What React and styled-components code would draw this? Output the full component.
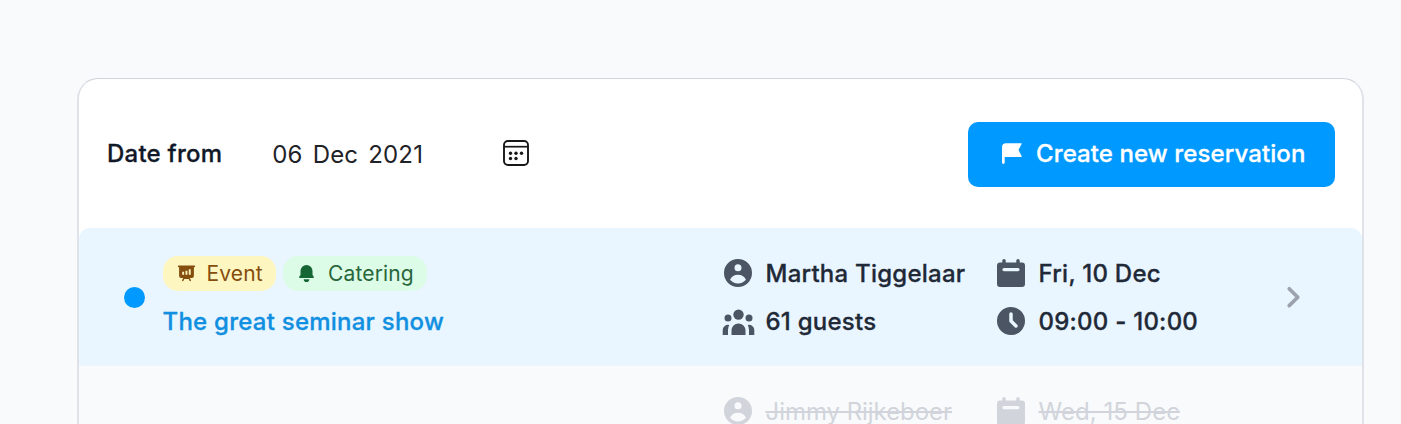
import React from 'react';
import styled, { createGlobalStyle } from 'styled-components';

const GlobalStyle = createGlobalStyle`
  * { box-sizing: border-box; }
  html, body { margin: 0; background: #f9fafc; }
  body { font-family: Inter, 'Liberation Sans', sans-serif; overflow: hidden; }
`;

const Page = styled.main`
  height: 424px;
  padding: 78px 37px 0 77px;
  overflow: hidden;
  background: #f9fafc;
`;

const Card = styled.section`
  height: 500px;
  border: solid #dfe2e8;
  border-width: 1px 2px;
  border-top-color: #d1d5db;
  border-radius: 21px;
  background: #fff;
`;

const Toolbar = styled.header`
  display: flex;
  align-items: center;
  height: 149px;
  padding: 0 27px 0 28px;
`;

const Text = styled.span`
  display: block;
  white-space: pre;
  font-size: ${(p) => p.$size || 24}px;
  font-weight: ${(p) => p.$weight || 500};
  line-height: 35px;
  letter-spacing: ${(p) => p.$track ?? 0.24}px;
  word-spacing: ${(p) => p.$words || 0}px;
  color: ${(p) => p.$color || '#1f2937'};
  -webkit-text-stroke: ${(p) => (p.$weight ? 0 : 0.3)}px currentColor;
  text-decoration: ${(p) => (p.$struck ? 'line-through' : 'none')};
  text-decoration-thickness: 2px;
`;

const DateField = styled.div`
  display: flex;
  align-items: center;
  justify-content: space-between;
  width: 257px;
  margin-left: 50px;
  padding-top: 2px;

  svg { margin-bottom: 3px; }
`;

const Button = styled.button`
  display: flex;
  align-items: center;
  gap: 14px;
  width: 367px;
  height: 65px;
  margin: 1px 0 0 auto;
  padding: 0 0 1px 34px;
  border: 0;
  border-radius: 10px;
  background: #0099ff;
  font-family: inherit;
`;

const Row = styled.article`
  display: grid;
  grid-template-columns: 21px 579px 273px 290px 14px;
  align-items: center;
  height: 138px;
  padding-left: 45px;
  border-radius: ${(p) => (p.$active ? '11px 11px 0 0' : '0')};
  background: ${(p) => (p.$active ? '#e9f6ff' : '#f9fafc')};
`;

const Dot = styled.i`
  width: 21px;
  height: 21px;
  border-radius: 50%;
  background: #0099ff;
`;

const Summary = styled.div`
  padding-left: 17.5px;
`;

const Tags = styled.div`
  display: flex;
  gap: 7px;
  margin-bottom: 13px;
`;

const Tag = styled.span`
  display: flex;
  align-items: center;
  gap: ${(p) => p.$gap}px;
  width: ${(p) => p.$width}px;
  height: 35px;
  padding-left: ${(p) => p.$pad}px;
  border-radius: 15px;
  color: ${(p) => p.$color};
  background: ${(p) => p.$bg};
`;

const Details = styled.div`
  display: flex;
  flex-direction: column;
  gap: 13px;
`;

const Detail = styled.div`
  display: flex;
  align-items: center;
  gap: 9.5px;
  height: 35px;
  color: ${(p) => p.$color || '#4b5563'};
`;

const Svg = styled.svg`
  display: block;
  flex: none;
  overflow: visible;
`;

const UserIcon = () => (
  <Svg width="32" height="28" viewBox="2 2 18.286 16" fill="currentColor">
    <path fillRule="evenodd" d="M18 10a8 8 0 11-16 0 8 8 0 0116 0zm-6-3a2 2 0 11-4 0 2 2 0 014 0zm-2 4a5 5 0 00-4.546 2.916A5.986 5.986 0 0010 16a5.986 5.986 0 004.546-2.084A5 5 0 0010 11z" />
  </Svg>
);

const GuestsIcon = () => (
  <Svg width="32" height="28" viewBox="0 0 32 28" fill="currentColor">
    <circle cx="14.500" cy="7.600" r="5.200" />
    <circle cx="4" cy="11" r="3.500" />
    <circle cx="25" cy="11" r="3.500" />
    <path d="M7.500 28v-4.500a7 7 0 0 1 14 0V28zM-1.300 28v-5a5.200 5.200 0 0 1 6.500-5 12 12 0 0 0-1.200 5v5zM30.300 28v-5a5.200 5.200 0 0 0-6.500-5 12 12 0 0 1 1.200 5v5z" />
  </Svg>
);

const CalendarIcon = () => (
  <Svg width="32" height="28" viewBox="0 0 32 28" fill="currentColor">
    <path fillRule="evenodd" d="M5.300 1.600a1.700 1.700 0 0 1 3.400 0v1.900h10.600V1.600a1.700 1.700 0 0 1 3.400 0v1.900H25a3 3 0 0 1 3 3V25a3 3 0 0 1-3 3H3a3 3 0 0 1-3-3V6.500a3 3 0 0 1 3-3h2.300zM7 9a1.600 1.600 0 0 0 0 3.200h14A1.600 1.600 0 0 0 21 9z" />
  </Svg>
);

const ClockIcon = () => (
  <Svg width="32" height="28" viewBox="2 2 18.286 16" fill="currentColor">
    <path fillRule="evenodd" d="M10 18a8 8 0 100-16 8 8 0 000 16zm1-12a1 1 0 10-2 0v4a1 1 0 00.293.707l2.828 2.829a1 1 0 101.415-1.415L11 9.586V6z" />
  </Svg>
);

const DatePickerIcon = () => (
  <Svg width="26" height="26" viewBox="0 0 26 26" fill="none" stroke="#171717">
    <rect x="1" y="1" width="24" height="24" rx="4" strokeWidth="1.900" />
    <path d="M1 6.700h24" strokeWidth="1.700" />
    <g fill="#171717" stroke="none">
      <circle cx="7.500" cy="13.200" r="1.700" />
      <circle cx="13" cy="13.200" r="1.700" />
      <circle cx="18.500" cy="13.200" r="1.700" />
      <circle cx="7.500" cy="18.500" r="1.700" />
      <circle cx="13" cy="18.500" r="1.700" />
    </g>
  </Svg>
);

const FlagIcon = () => (
  <Svg width="20" height="21" viewBox="0 0 20 21" fill="#fff">
    <path d="M0 4.200A4 4 0 0 1 4 .2h15.200a.5.500 0 0 1 .4.800L16.500 7l3.200 6.200a.6.600 0 0 1-.5.800H2.700v5.600a1.350 1.350 0 0 1-2.700 0z" />
  </Svg>
);

const ChartIcon = () => (
  <Svg width="17" height="17" viewBox="0 0 17 17" fill="currentColor">
    <path fillRule="evenodd" d="M.7.500h15.600a.7.700 0 0 1 0 1.700h-.4V11a2 2 0 0 1-2 2h-2.200l1.200 2a.8.800 0 0 1-1.400.8L10.700 14H6.300l-.8 1.800a.8.800 0 0 1-1.400-.8l1.200-2H3.100a2 2 0 0 1-2-2V2.200H.7A.7.700 0 0 1 .7.500zM4.200 6.800v3h1.900v-3zM7.500 5.800v4h1.900v-4zM10.800 4.300v5.500h1.900V4.300z" />
  </Svg>
);

const BellIcon = () => (
  <Svg width="15" height="17" viewBox="0 0 15 17" fill="currentColor">
    <path d="M7.500 0a6 6 0 0 0-6 6v4L.2 11.800c-.4.600 0 1.200.6 1.200h13.400c.6 0 1-.6.600-1.200L13.500 10V6a6 6 0 0 0-6-6zM4.700 14.200h5.600a2.800 2.800 0 0 1-5.600 0z" />
  </Svg>
);

const ChevronIcon = () => (
  <Svg width="14" height="22" viewBox="0 0 14 22" fill="none" stroke="#9ca3af" strokeWidth="3.700" strokeLinecap="round" strokeLinejoin="round">
    <path d="M2.200 2.800L10.800 11.200l-8.600 8.400" />
  </Svg>
);

const MUTED = '#d1d5db';

export default function App() {
  return (
    <>
      <GlobalStyle />
      <Page>
        <Card>
          <Toolbar>
            <Text $color="#111827">Date from</Text>
            <DateField>
              <Text $weight={400} $track={0.15} $words={3.2} $color="#1f2328">06 Dec 2021</Text>
              <DatePickerIcon />
            </DateField>
            <Button>
              <FlagIcon />
              <Text $track={0.1} $color="#fff">Create new reservation</Text>
            </Button>
          </Toolbar>
          <Row $active>
            <Dot />
            <Summary>
              <Tags>
                <Tag $width={113} $pad={15} $gap={12} $color="#854d0e" $bg="#fef6c0">
                  <ChartIcon />
                  <Text $size={21} $weight={400} $track={0.15} $color="#854d0e">Event</Text>
                </Tag>
                <Tag $width={144} $pad={16.5} $gap={14} $color="#166534" $bg="#dcfce7">
                  <BellIcon />
                  <Text $size={21} $weight={400} $track={0.15} $color="#28663b">Catering</Text>
                </Tag>
              </Tags>
              <Text $color="#118fe0">The great seminar show</Text>
            </Summary>
            <Details>
              <Detail><UserIcon /><Text>Martha Tiggelaar</Text></Detail>
              <Detail><GuestsIcon /><Text>61 guests</Text></Detail>
            </Details>
            <Details>
              <Detail><CalendarIcon /><Text>Fri, 10 Dec</Text></Detail>
              <Detail><ClockIcon /><Text>09:00 - 10:00</Text></Detail>
            </Details>
            <ChevronIcon />
          </Row>
          <Row>
            <span />
            <span />
            <Details>
              <Detail $color={MUTED}><UserIcon /><Text $weight={400} $track={-0.05} $struck $color={MUTED}>Jimmy Rijkeboer</Text></Detail>
              <Detail />
            </Details>
            <Details>
              <Detail $color={MUTED}><CalendarIcon /><Text $weight={400} $track={0.05} $struck $color={MUTED}>Wed, 15 Dec</Text></Detail>
              <Detail />
            </Details>
          </Row>
        </Card>
      </Page>
    </>
  );
}
